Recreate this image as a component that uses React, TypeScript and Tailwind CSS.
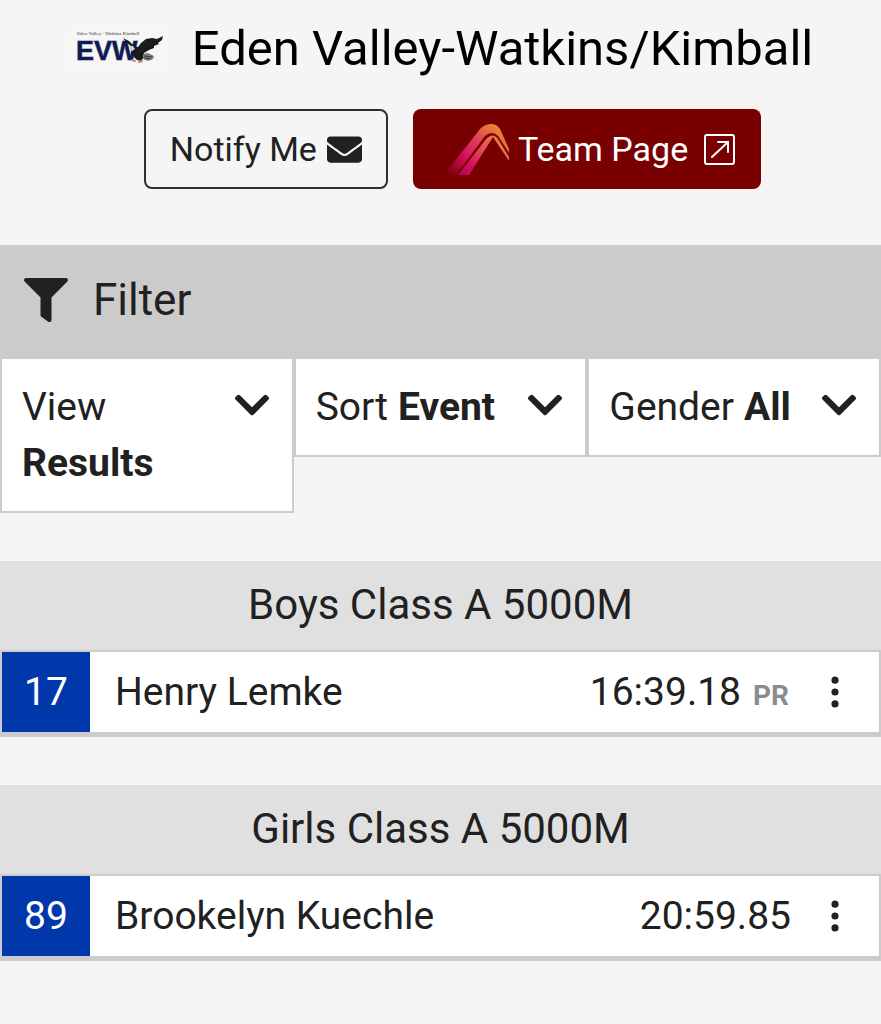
import { useState } from "react";
import { BsThreeDotsVertical } from "react-icons/bs";
import { FaChevronDown, FaEnvelope, FaFilter } from "react-icons/fa";

interface Result {
  place: number;
  name: string;
  time: string;
  pr?: boolean;
}

interface Race {
  title: string;
  results: Result[];
}

const races: Race[] = [
  {
    title: "Boys Class A 5000M",
    results: [{ place: 17, name: "Henry Lemke", time: "16:39.18", pr: true }],
  },
  {
    title: "Girls Class A 5000M",
    results: [{ place: 89, name: "Brookelyn Kuechle", time: "20:59.85" }],
  },
];

const filters = [
  { id: "view", label: "View", options: ["Results", "Athletes"] },
  { id: "sort", label: "Sort", options: ["Event", "Name"] },
  { id: "gender", label: "Gender", options: ["All", "Boys", "Girls"] },
];

function SchoolLogo() {
  return (
    <svg
      viewBox="0 0 100 50"
      className="w-[100px] h-[50px] shrink-0"
      role="img"
      aria-label="EVW"
    >
      <rect y="3" width="100" height="47" fill="#f6f6f6" />
      <text
        x="9"
        y="11"
        fill="#333"
        className="font-['Liberation_Serif',serif] text-[5px]"
      >
        Eden Valley - Watkins Kimball
      </text>
      <text
        x="8"
        y="36"
        fill="#0e1a52"
        stroke="#8d90a8"
        strokeWidth="1"
        className="font-['Liberation_Sans',sans-serif] text-[27px] font-bold [paint-order:stroke]"
      >
        EVW
      </text>
      {/* eagle */}
      <path
        d="M55 14 L61 17 L66 22 L70 23 L73 19 L78 15 L84 14 L89 15 L95 12 L94 16 L90 19 L91 20 L86 22 L86 24 L81 26 L76 29 L76 33 L73 37 L69 36 L66 33 L64 27 L63 22 L58 18 Z"
        fill="#1d1a1b"
      />
      <path
        d="M75 30 L80 29 L86 32 L85 35 L80 37 L75 35 Z"
        fill="#807d79"
      />
      <path d="M76 32 l8 1 M76 34 l7 1" stroke="#3b3836" strokeWidth="1" />
      <path d="M61 22 L65 22 L67 25 L64 27 L61 25 Z" fill="#cfd0d4" />
      <path
        d="M64 36 l3 1 M71 38 l3 -1"
        stroke="#b98c72"
        strokeWidth="2"
        strokeLinecap="round"
      />
    </svg>
  );
}

function TeamLogo() {
  return (
    <svg
      viewBox="0 0 66 52"
      className="w-[66px] h-[52px] shrink-0"
      aria-hidden="true"
    >
      <defs>
        <linearGradient id="stripe" x1="0" y1="1" x2="1" y2="0.1">
          <stop offset="0.02" stopColor="#c8085b" stopOpacity="0" />
          <stop offset="0.36" stopColor="#d5105f" />
          <stop offset="0.62" stopColor="#dc3d5a" />
          <stop offset="0.85" stopColor="#e97638" />
          <stop offset="1" stopColor="#ef9038" />
        </linearGradient>
        <linearGradient id="stripeInner" x1="0" y1="1" x2="1" y2="0.2">
          <stop offset="0" stopColor="#b00450" />
          <stop offset="0.3" stopColor="#d81062" />
          <stop offset="0.6" stopColor="#e04a57" />
          <stop offset="1" stopColor="#ee8a35" />
        </linearGradient>
      </defs>
      <path
        d="M0 52 L36 6 Q41 1 47 1 Q53 1 56 6 L65 26 V30 L54 13 Q48 7 41 13 L12 52 Z"
        fill="url(#stripe)"
      />
      <path
        d="M14 52 L42 16 Q49 9 54 16 L65 34 V38 L49 14 L25 52 Z"
        fill="url(#stripeInner)"
      />
    </svg>
  );
}

function ExternalIcon() {
  return (
    <svg
      viewBox="0 0 31 31"
      fill="none"
      stroke="currentColor"
      strokeWidth="2"
      strokeLinecap="round"
      className="ml-2 size-[31px] shrink-0"
      aria-hidden="true"
    >
      <rect x="1" y="1" width="29" height="29" rx="2" />
      <path d="M8 23 L24 8 M14 8 H24 V18" />
    </svg>
  );
}

function FilterSelect({ id, label, options }: (typeof filters)[number]) {
  const [value, setValue] = useState(options[0]);

  return (
    <div className="flex items-start justify-between border-x-2 border-b-2 border-[#cbcbcb] bg-white p-5 text-[39px] leading-[56px]">
      <div className="flex flex-1 flex-wrap gap-x-[10px]">
        <label htmlFor={id}>{label}</label>
        <select
          id={id}
          value={value}
          onChange={(e) => setValue(e.target.value)}
          className="appearance-none bg-transparent font-bold field-sizing-content"
        >
          {options.map((option) => (
            <option key={option}>{option}</option>
          ))}
        </select>
      </div>
      <FaChevronDown
        className="pointer-events-none mt-1.5 size-10 shrink-0"
        aria-hidden="true"
      />
    </div>
  );
}

function RaceResults({ title, results }: Race) {
  return (
    <section className="mt-12">
      <h2 className="bg-[#e0e0e0] pt-4 pb-[17px] text-center text-[42px] leading-[56px]">
        {title}
      </h2>
      <ul>
        {results.map((result) => (
          <li
            key={result.place}
            className="flex items-stretch border-2 border-b-[5px] border-[#cbcbcb] bg-white text-[39px] leading-[80px]"
          >
            <span className="w-[88px] bg-[#0037ab] text-center text-white">
              {result.place}
            </span>
            <a href="#athlete" className="flex-1 pl-[25px]">
              {result.name}
            </a>
            <a href="#result">
              {result.time}
              {result.pr && (
                <span className="mr-0.5 ml-3 text-[28px] leading-none font-bold text-[#8c8c8c]">
                  PR
                </span>
              )}
            </a>
            <button
              type="button"
              aria-label={`More options for ${result.name}`}
              className="flex w-[88px] items-center justify-center"
            >
              <BsThreeDotsVertical className="size-[38px]" />
            </button>
          </li>
        ))}
      </ul>
    </section>
  );
}

export default function App() {
  return (
    <main className="min-h-screen bg-[#f5f5f5] font-[Roboto,sans-serif] text-[#212121]">
      <header className="pt-[21px] pb-14">
        <div className="flex items-center justify-center gap-6">
          <SchoolLogo />
          <h1 className="text-[49px] leading-[56px] text-black">
            Eden Valley-Watkins/Kimball
          </h1>
        </div>
        <div className="mt-8 flex justify-center gap-[25px] pl-6 text-[34px]">
          <button
            type="button"
            className="flex h-20 items-center gap-[10px] rounded-lg border-2 border-[#2b2f3a] px-6"
          >
            Notify Me
            <FaEnvelope className="size-[35px]" />
          </button>
          <a
            href="#team"
            className="flex h-20 items-center gap-2 rounded-lg bg-[#780000] pr-[26px] pl-[31px] text-white"
          >
            <TeamLogo />
            Team Page
            <ExternalIcon />
          </a>
        </div>
      </header>

      <div className="flex items-center gap-[25px] bg-[#cbcbcb] px-6 pt-[27px] pb-[31px] text-[44px] leading-[56px]">
        <FaFilter className="size-11 shrink-0" />
        Filter
      </div>
      <div className="grid grid-cols-3 items-start">
        {filters.map((filter) => (
          <FilterSelect key={filter.id} {...filter} />
        ))}
      </div>

      {races.map((race) => (
        <RaceResults key={race.title} {...race} />
      ))}
    </main>
  );
}
